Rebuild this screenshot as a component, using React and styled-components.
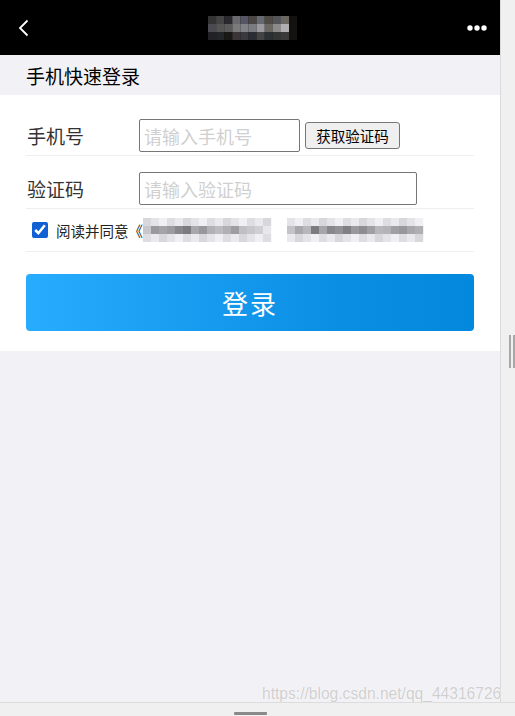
import React from 'react'
import { styled, createGlobalStyle } from 'styled-components'

const GlobalStyle = createGlobalStyle`
  html, body {
    margin: 0;
    padding: 0;
    background: #f0f0f0;
  }
  * {
    box-sizing: border-box;
  }
`

const Frame = styled.div`
  position: relative;
  width: 515px;
  height: 716px;
  overflow: hidden;
  display: grid;
  grid-template-columns: 500px 15px;
  grid-template-rows: 702px 14px;
  font-family: "Noto Sans CJK SC", "Noto Sans", sans-serif;
`
const Main = styled.div`
  display: flex;
  flex-direction: column;
  background: #f2f2f6;
`
const Header = styled.div`
  height: 55px;
  background: #000;
  display: flex;
  align-items: center;
  justify-content: space-between;
  padding: 0 13px 0 18px;
`
const TitleSlot = styled.div`
  margin-left: 8px;
  display: flex;
`
const PageTitle = styled.div`
  height: 40px;
  display: flex;
  align-items: center;
  padding-left: 26px;
  font-size: 19px;
  color: #000;
`
const Panel = styled.div`
  background: #fff;
  padding: 8px 26px 20px;
`
const FieldRow = styled.div`
  display: flex;
  align-items: center;
  padding: 16px 0 3px;
  border-bottom: 1px solid #eee;
`
const Label = styled.div`
  width: 113px;
  padding-left: 1px;
  font-size: 19px;
  color: #333;
`
const Input = styled.input`
  width: ${p => p.$w}px;
  height: 33px;
  border: 1px solid #767676;
  border-radius: 2px;
  padding: 0 4px;
  font-family: inherit;
  font-size: 18px;
  outline: none;
  &::placeholder {
    color: #d0d0d0;
  }
`
const CodeButton = styled.button`
  margin-left: 5px;
  width: 95px;
  height: 27px;
  padding: 0;
  background: #efefef;
  border: 1px solid #767676;
  border-radius: 3px;
  font-family: inherit;
  font-size: 14.5px;
  color: #000;
`
const AgreeRow = styled.div`
  display: flex;
  align-items: center;
  height: 43px;
  border-bottom: 1px solid #eee;
`
const Check = styled.input`
  margin: 0 8px 0 6px;
  width: 16px;
  height: 16px;
  accent-color: #1261d4;
`
const AgreeText = styled.span`
  font-size: 14.5px;
  color: #222;
  width: 87px;
  white-space: nowrap;
  overflow: hidden;
`
const LoginButton = styled.button`
  display: block;
  width: 100%;
  height: 57px;
  margin-top: 22px;
  border: none;
  border-radius: 4px;
  background: linear-gradient(90deg, #27acff 0%, #0a8ee3 70%, #0288dc 100%);
  color: #fff;
  font-family: inherit;
  font-size: 26px;
  letter-spacing: 2px;
`
const SideStrip = styled.div`
  background: #f0f0f0;
  border-left: 1px solid #dadada;
  padding: 335px 0 0 8px;
`
const Thumb = styled.div`
  width: 6px;
  height: 33px;
  border-left: 2px solid #a8a8a8;
  border-right: 2px solid #a8a8a8;
`
const BottomBar = styled.div`
  grid-column: 1 / 3;
  background: #f0f0f0;
  border-top: 1px solid #dcdcdc;
  padding: 9px 0 0 234px;
`
const Handle = styled.div`
  width: 33px;
  height: 3px;
  background: #8a8a8a;
  border-radius: 1px;
`
const Watermark = styled.div`
  position: absolute;
  left: 262px;
  top: 685px;
  font-family: "Liberation Sans", Arial, sans-serif;
  font-size: 15.6px;
  color: #cfcfcf;
  text-shadow: 0 0 1px #fff, 0 0 1px #fff;
  white-space: nowrap;
`

const BackIcon = () => (
  <svg width="12" height="18" viewBox="0 0 12 18">
    <path d="M9.5 1.5 L2 9 L9.5 16.5" fill="none" stroke="#fff" strokeWidth="1.8" />
  </svg>
)

const MoreIcon = () => (
  <svg width="20" height="6" viewBox="0 0 20 6">
    <circle cx="3" cy="3" r="2.7" fill="#fff" />
    <circle cx="10" cy="3" r="2.7" fill="#fff" />
    <circle cx="17" cy="3" r="2.7" fill="#fff" />
  </svg>
)

// blurred-out text, drawn as pixel mosaic
const headerShades = [
  ['#333', '#444', '#2a2a2e', '#6a6a6e', '#555566', '#4a4644', '#666a70', '#4e4a44', '#545458', '#6a6660', '#141210'],
  ['#4a4a50', '#555', '#5a5a5a', '#7a7a7a', '#808088', '#7a7a80', '#9a9aa0', '#6a6660', '#8a8a8a', '#b0aeb0', '#141210'],
  ['#222226', '#22262a', '#1a1814', '#3a3638', '#3a3a3e', '#2a2e34', '#444', '#2a3034', '#343434', '#3a3a3a', '#141210'],
]

const mid = [0xc8, 0x9a, 0xa4, 0x9c, 0x88, 0x7c, 0xa8, 0x98, 0xb2, 0xbc, 0xb0, 0x9e, 0xc0, 0xc8, 0xd0, 0xe8,
  0xc4, 0xa8, 0xb8, 0x7c, 0xa6, 0x88, 0x92, 0x80, 0x9a, 0x8e, 0xa0, 0xb8, 0xb4, 0xa0, 0x98, 0xa8, 0xb0]
const edge = (i, r) => 0xd8 + ((i * 37 + r * 53) % 5) * 6

const AgreeMosaic = () => {
  const cells = []
  const cols = [
    ...Array.from({ length: 16 }, (_, i) => 143 + i * 8),
    ...Array.from({ length: 17 }, (_, i) => 287 + i * 8),
  ]
  cols.forEach((x, i) => {
    for (let r = 0; r < 3; r++) {
      const v = r === 1 ? mid[i] : Math.min(edge(i, r), 0xf4)
      cells.push(
        <rect key={i + '-' + r} x={x - 143} y={r * 8} width="8.2" height="8.2"
          fill={`rgb(${v},${v},${v + 4})`} />
      )
    }
  })
  return <svg width="282" height="24" viewBox="0 0 282 24">{cells}</svg>
}

const HeaderMosaic = () => (
  <svg width="89" height="24" viewBox="0 0 89 24">
    {headerShades.map((row, r) =>
      row.map((c, i) => (
        <rect key={r + '-' + i} x={i * 8.1} y={r * 8} width="8.2" height="8.2" fill={c} />
      ))
    )}
  </svg>
)

const App = () => {
  return (
    <Frame>
      <GlobalStyle />
      <Main>
        <Header>
          <BackIcon />
          <TitleSlot>
            <HeaderMosaic />
          </TitleSlot>
          <MoreIcon />
        </Header>
        <PageTitle>手机快速登录</PageTitle>
        <Panel>
          <FieldRow>
            <Label>手机号</Label>
            <Input $w={161} placeholder="请输入手机号" />
            <CodeButton>获取验证码</CodeButton>
          </FieldRow>
          <FieldRow>
            <Label>验证码</Label>
            <Input $w={278} placeholder="请输入验证码" />
          </FieldRow>
          <AgreeRow>
            <Check type="checkbox" defaultChecked />
            <AgreeText>阅读并同意《</AgreeText>
            <AgreeMosaic />
          </AgreeRow>
          <LoginButton>登录</LoginButton>
        </Panel>
      </Main>
      <SideStrip>
        <Thumb />
      </SideStrip>
      <BottomBar>
        <Handle />
      </BottomBar>
      <Watermark>https://blog.csdn.net/qq_44316726</Watermark>
    </Frame>
  )
}

export default App
